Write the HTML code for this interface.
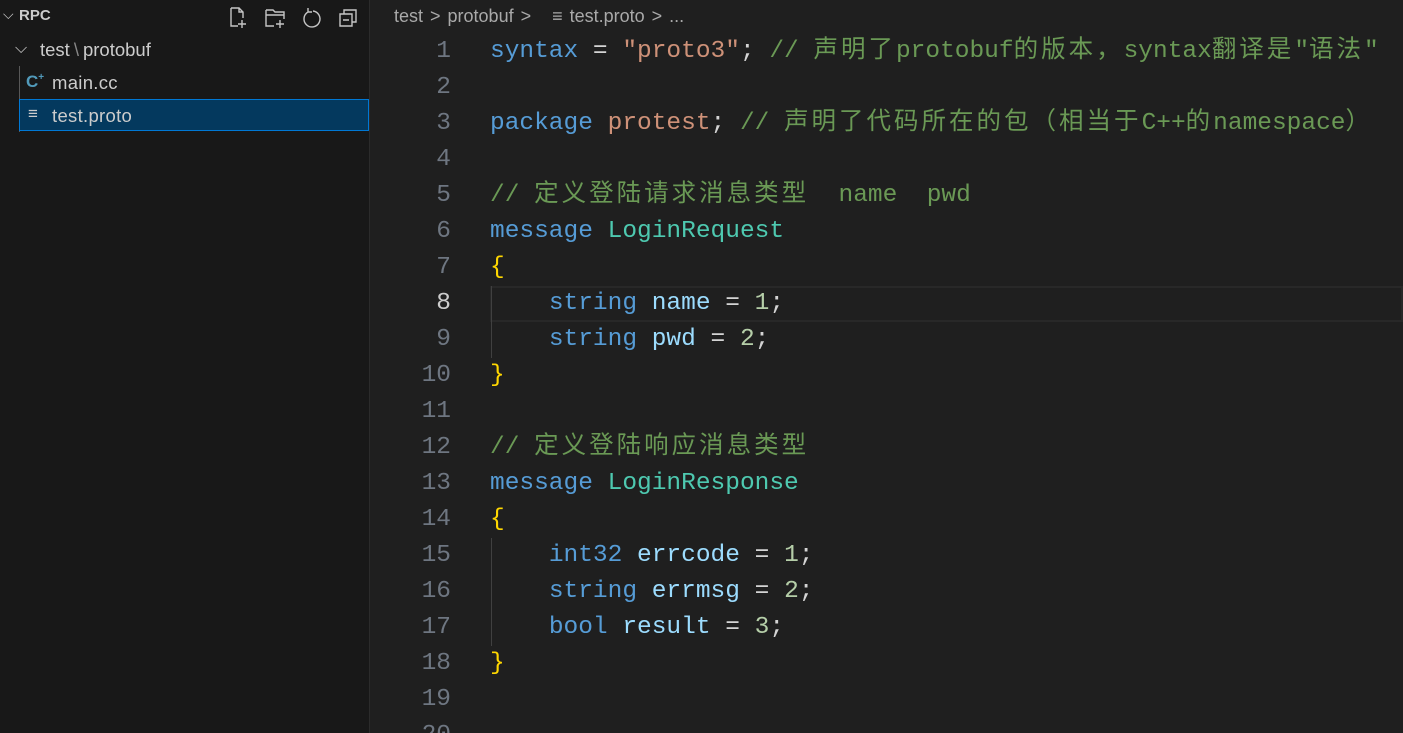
<!DOCTYPE html>
<html style="overflow:hidden;height:733px"><head><meta charset="utf-8"><style>
*{margin:0;padding:0;box-sizing:border-box}
body{width:1403px;height:733px;overflow:hidden;background:#1f1f1f;font-family:"Liberation Sans","Noto Sans CJK SC",sans-serif;position:relative}
#side{position:absolute;left:0;top:0;width:370px;height:733px;background:#181818;border-right:1px solid #2b2b2b}
.t{position:absolute;color:#cccccc;font-size:18.5px;white-space:nowrap}
#sel{position:absolute;left:19px;top:99px;width:350px;height:32px;background:#04395e;border:1px solid #0078d4}
#guide{position:absolute;left:19px;top:66px;width:1px;height:66px;background:#585858}
.code{position:absolute;left:0;font-family:"Liberation Mono","Noto Sans CJK SC",monospace;font-size:24.5px;white-space:pre;height:36px;line-height:36px}
.ln{position:absolute;left:380px;width:71px;text-align:right;color:#6e7681;font-family:"Liberation Mono",monospace;font-size:24.5px;height:36px;line-height:36px}
.k{color:#569cd6}.s{color:#ce9178}.c{color:#6a9955}.ty{color:#4ec9b0}.v{color:#9cdcfe}.n{color:#b5cea8}.b{color:#ffd700}.d{color:#d4d4d4}
.z{letter-spacing:3px}
.ig{position:absolute;left:491px;width:1px;background:#404040}
#ed{position:absolute;left:0;top:2px;width:1403px;height:731px;overflow:hidden}
</style></head><body>
<div id="side">
<div class="t" style="left:3px;top:6px;font-size:14px">⌵</div>
<div class="t" style="left:19px;top:7px;font-size:15px;font-weight:bold">RPC</div>
<svg style="position:absolute;left:228px;top:6px" width="130" height="24" fill="none" stroke="#c5c5c5" stroke-width="1.4">
<path d="M3 2h8l4 4v6M3 2v18h7M11 2v4h4M14 14v8M10 18h8"/>
<path d="M38 4h7l2 2h9v7M38 4v16h8M38 9h18M52 14v8M48 18h8"/>
<path d="M80 6a8 8 0 1 0 5 -1M80 2v4h4"/>
<path d="M112 8h12v12h-12zM116 8v-4h12v12h-4M115 14h6"/>
</svg>
<div class="t" style="left:15px;top:40px;font-size:16px">⌵</div>
<div class="t" style="left:40px;top:39px">test<span style="color:#888;margin:0 4px">\</span>protobuf</div>
<div id="guide"></div>
<div id="sel"></div>
<div class="t" style="left:26px;top:72px;color:#519aba;font-weight:bold;font-size:17px">C<span style="font-size:10px;vertical-align:top">+</span></div>
<div class="t" style="left:52px;top:72px;letter-spacing:0.3px">main.cc</div>
<div class="t" style="left:28px;top:104px;font-size:17px">≡</div>
<div class="t" style="left:52px;top:105px;letter-spacing:0.3px">test.proto</div>
</div>
<div class="t" style="left:394px;top:6px;font-size:18px;color:#a9a9a9;word-spacing:2px">test &gt; protobuf &gt; &nbsp; <span>≡</span> test.proto &gt; ...</div>

<div id="ed">
<div style="position:absolute;left:490px;top:284px;width:913px;height:36px;border:2px solid #282828"></div>
<div class="ig" style="top:284px;height:72px"></div>
<div class="ig" style="top:536px;height:108px"></div>

<div class="ln" style="top:32px">1</div><div class="code" style="left:490px;top:32px"><span class="k">syntax</span><span class="d"> = </span><span class="s">"proto3"</span><span class="d">; </span><span class="c">// <span class="z">声明了</span>protobuf<span class="z">的版本，</span>syntax<span class="z">翻译是</span>"<span class="z">语法</span>"</span></div>
<div class="ln" style="top:68px">2</div>
<div class="ln" style="top:104px">3</div><div class="code" style="left:490px;top:104px"><span class="k">package</span><span class="d"> </span><span class="s">protest</span><span class="d">; </span><span class="c">// <span class="z">声明了代码所在的包（相当于</span>C++<span class="z">的</span>namespace<span class="z">）</span></span></div>
<div class="ln" style="top:140px">4</div>
<div class="ln" style="top:176px">5</div><div class="code" style="left:490px;top:176px"><span class="c">// <span class="z">定义登陆请求消息类型</span>  name  pwd</span></div>
<div class="ln" style="top:212px">6</div><div class="code" style="left:490px;top:212px"><span class="k">message</span><span class="d"> </span><span class="ty">LoginRequest</span></div>
<div class="ln" style="top:248px">7</div><div class="code" style="left:490px;top:248px"><span class="b">{</span></div>
<div class="ln" style="top:284px;color:#cccccc">8</div><div class="code" style="left:490px;top:284px">    <span class="k">string</span> <span class="v">name</span><span class="d"> = </span><span class="n">1</span><span class="d">;</span></div>
<div class="ln" style="top:320px">9</div><div class="code" style="left:490px;top:320px">    <span class="k">string</span> <span class="v">pwd</span><span class="d"> = </span><span class="n">2</span><span class="d">;</span></div>
<div class="ln" style="top:356px">10</div><div class="code" style="left:490px;top:356px"><span class="b">}</span></div>
<div class="ln" style="top:392px">11</div>
<div class="ln" style="top:428px">12</div><div class="code" style="left:490px;top:428px"><span class="c">// <span class="z">定义登陆响应消息类型</span></span></div>
<div class="ln" style="top:464px">13</div><div class="code" style="left:490px;top:464px"><span class="k">message</span><span class="d"> </span><span class="ty">LoginResponse</span></div>
<div class="ln" style="top:500px">14</div><div class="code" style="left:490px;top:500px"><span class="b">{</span></div>
<div class="ln" style="top:536px">15</div><div class="code" style="left:490px;top:536px">    <span class="k">int32</span> <span class="v">errcode</span><span class="d"> = </span><span class="n">1</span><span class="d">;</span></div>
<div class="ln" style="top:572px">16</div><div class="code" style="left:490px;top:572px">    <span class="k">string</span> <span class="v">errmsg</span><span class="d"> = </span><span class="n">2</span><span class="d">;</span></div>
<div class="ln" style="top:608px">17</div><div class="code" style="left:490px;top:608px">    <span class="k">bool</span> <span class="v">result</span><span class="d"> = </span><span class="n">3</span><span class="d">;</span></div>
<div class="ln" style="top:644px">18</div><div class="code" style="left:490px;top:644px"><span class="b">}</span></div>
<div class="ln" style="top:680px">19</div>
<div class="ln" style="top:716px">20</div>
</div>
</body></html>
